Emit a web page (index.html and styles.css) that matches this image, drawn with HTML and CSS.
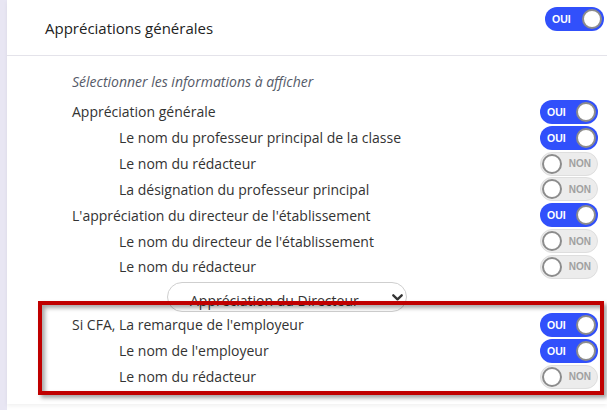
FILE: index.html
```html
<!DOCTYPE html>
<html lang="fr">
<head>
<meta charset="utf-8">
<link rel="stylesheet" href="styles.css">
</head>
<body>
<div class="page">
  <div class="strip"></div>
  <div class="card">
    <div class="card-head">
      <div class="title">Appréciations générales</div>
      <div class="toggle on head-toggle"><span class="lbl">OUI</span><span class="knob"></span></div>
    </div>
    <div class="card-body">
      <div class="hint">Sélectionner les informations à afficher</div>
      <div class="row"><span class="txt">Appréciation générale</span><div class="toggle on"><span class="lbl">OUI</span><span class="knob"></span></div></div>
      <div class="row sub"><span class="txt">Le nom du professeur principal de la classe</span><div class="toggle on"><span class="lbl">OUI</span><span class="knob"></span></div></div>
      <div class="row sub"><span class="txt">Le nom du rédacteur</span><div class="toggle off"><span class="knob"></span><span class="lbl">NON</span></div></div>
      <div class="row sub"><span class="txt">La désignation du professeur principal</span><div class="toggle off"><span class="knob"></span><span class="lbl">NON</span></div></div>
      <div class="row"><span class="txt">L'appréciation du directeur de l'établissement</span><div class="toggle on"><span class="lbl">OUI</span><span class="knob"></span></div></div>
      <div class="row sub"><span class="txt">Le nom du directeur de l'établissement</span><div class="toggle off"><span class="knob"></span><span class="lbl">NON</span></div></div>
      <div class="row sub"><span class="txt">Le nom du rédacteur</span><div class="toggle off"><span class="knob"></span><span class="lbl">NON</span></div></div>
      <div class="select">
        <span class="select-txt">Appréciation du Directeur</span>
        <svg class="chev" width="11" height="7" viewBox="0 0 11 7"><path d="M1.3 1.3 L5.5 5.3 L9.7 1.3" fill="none" stroke="#333" stroke-width="2.3" stroke-linecap="round" stroke-linejoin="round"/></svg>
      </div>
      <div class="group">
        <div class="row"><span class="txt">Si CFA, La remarque de l'employeur</span><div class="toggle on"><span class="lbl">OUI</span><span class="knob"></span></div></div>
        <div class="row sub"><span class="txt">Le nom de l'employeur</span><div class="toggle on"><span class="lbl">OUI</span><span class="knob"></span></div></div>
        <div class="row sub"><span class="txt">Le nom du rédacteur</span><div class="toggle off"><span class="knob"></span><span class="lbl">NON</span></div></div>
        <div class="highlight"></div>
      </div>
    </div>
  </div>
</div>
</body>
</html>
```
FILE: styles.css
```css
* { box-sizing: border-box; }
html, body { margin: 0; padding: 0; background: #fff; }
body {
  font-family: "Open Sans", "Noto Sans", sans-serif;
  color: #333;
  width: 607px;
  height: 410px;
  overflow: hidden;
}
.page {
  display: flex;
  height: 410px;
}
.strip {
  width: 7px;
  background: #e8e6f3;
  flex: none;
}
.card {
  flex: 1;
  background: #fff;
  height: 404px;
  box-shadow: 0 2px 4px rgba(0,0,0,0.06);
}
.card-head {
  display: flex;
  justify-content: space-between;
  align-items: flex-start;
  height: 56px;
  border-bottom: 1px solid #e4e3ea;
  padding: 0 3px 0 38px;
}
.title {
  font-size: 15px;
  line-height: 22px;
  padding-top: 17px;
  color: #222;
}
.head-toggle {
  margin-top: 7px;
  width: 59px !important;
}
.card-body {
  padding: 13px 9px 0 65px;
}
.hint {
  font-style: italic;
  font-size: 14px;
  line-height: 26px;
  color: #555a68;
  margin-bottom: 4px;
}
.row {
  display: flex;
  justify-content: space-between;
  align-items: center;
  height: 25.85px;
  font-size: 14px;
}
.row.sub .txt { padding-left: 47px; }
.txt { color: #333; }

.toggle {
  position: relative;
  width: 58px;
  height: 24px;
  border-radius: 12px;
  display: flex;
  align-items: center;
  flex: none;
}
.toggle.on {
  background: #3150fb;
  justify-content: space-between;
  padding: 0 2px 0 7px;
}
.toggle.off {
  background: #ececec;
  border: 1px solid #dedede;
  justify-content: space-between;
  padding: 0 6px 0 1px;
}
.lbl {
  font-family: "Liberation Sans", Arial, sans-serif;
  font-weight: bold;
  font-size: 10.5px;
}
.toggle.on .lbl { color: #fff; }
.toggle.off .lbl { color: #a0a0a0; font-size: 10px; }
.knob {
  width: 20px;
  height: 20px;
  border-radius: 50%;
  background: #fff;
  border: 2.5px solid #8c8c8c;
}

.select {
  margin: 2px 0 0 95px;
  width: 240px;
  height: 30px;
  border: 1px solid #cfcfcf;
  border-radius: 15px;
  display: flex;
  align-items: flex-start;
  justify-content: space-between;
  padding: 8px 3px 0 22px;
  font-size: 14px;
  line-height: 20px;
  color: #333;
}
.chev { align-self: center; margin-top: -6px; }

.group {
  position: relative;
}
.highlight {
  position: absolute;
  left: -34px;
  right: -6px;
  top: -11px;
  bottom: -6px;
  border: 4.5px solid #c00000;
  box-shadow: 3px 3px 4px rgba(0,0,0,0.35), inset 3px 3px 4px rgba(0,0,0,0.35);
  pointer-events: none;
}
```
